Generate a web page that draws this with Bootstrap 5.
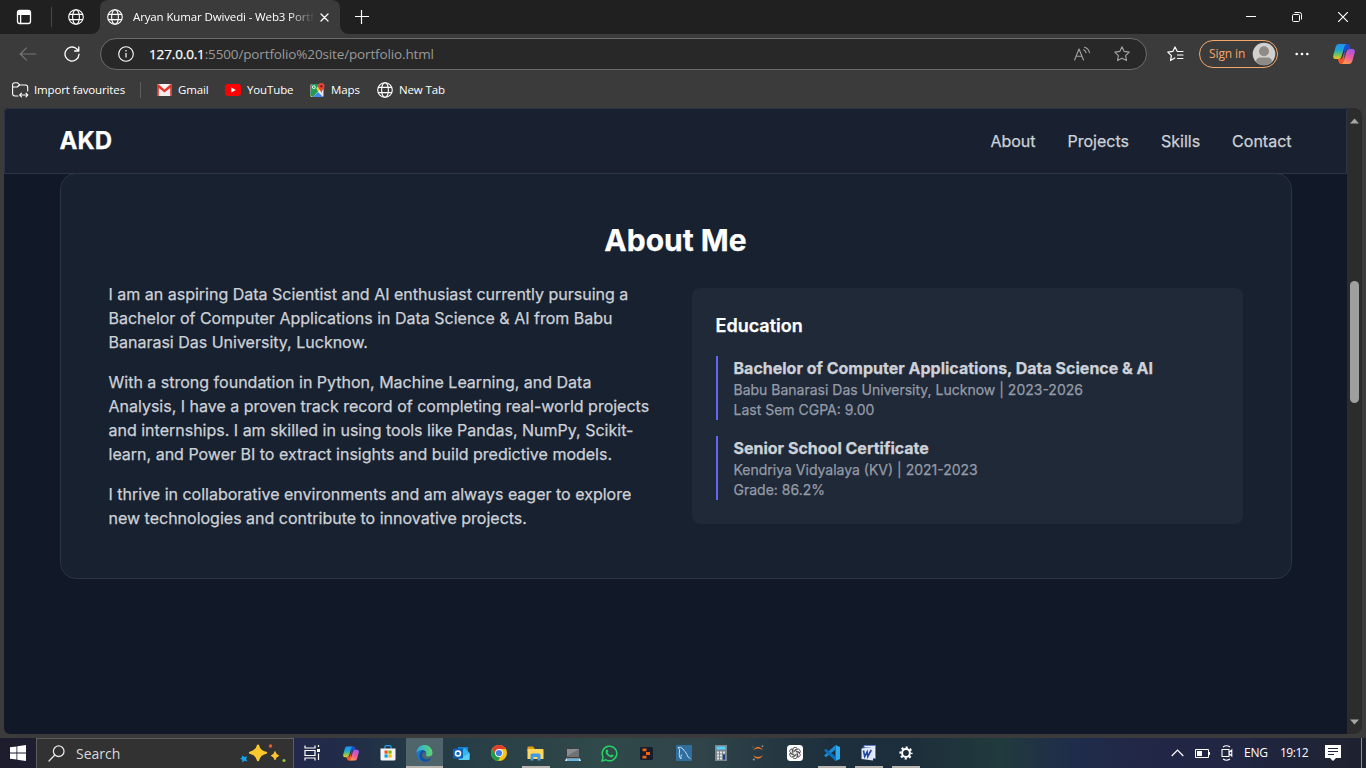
<!DOCTYPE html>
<html lang="en">
<head>
<meta charset="utf-8">
<meta name="viewport" content="width=device-width, initial-scale=1">
<title>Aryan Kumar Dwivedi - Web3 Portfolio</title>
<link href="https://cdn.jsdelivr.net/npm/bootstrap@5.3.0/dist/css/bootstrap.min.css" rel="stylesheet">
<style>
  body { width: 1366px; height: 768px; overflow: hidden; background: #3b3b3b; color: #fff; font: 12px/16px "Open Sans", "Noto Sans", sans-serif; }
  svg { display: block; flex: none; }
  .ln { fill: none; stroke: currentColor; stroke-linecap: round; stroke-linejoin: round; }
  /* browser chrome */
  .tabstrip { height: 34px; background: #202020; }
  .tabstrip .split { width: 1px; height: 20px; background: #484848; }
  .tab-active { width: 240px; height: 34px; background: #3b3b3b; border-radius: 8px 8px 0 0; position: relative; }
  .tab-active::before, .tab-active::after { content: ""; position: absolute; bottom: 0; width: 8px; height: 8px; }
  .tab-active::before { left: -8px; background: radial-gradient(circle at 0 0, #202020 7.5px, #3b3b3b 8px); }
  .tab-active::after { right: -8px; background: radial-gradient(circle at 100% 0, #202020 7.5px, #3b3b3b 8px); }
  .tab-title { width: 180px; overflow: hidden; white-space: nowrap; font-size: 11.5px; letter-spacing: -.13px; -webkit-mask-image: linear-gradient(90deg, #000 155px, transparent 182px); mask-image: linear-gradient(90deg, #000 155px, transparent 182px); }
  .toolbar { height: 40px; }
  .omnibox { width: 1047px; height: 32px; background: #282828; border: 1px solid #6c6c6c; border-radius: 16px; }
  .url { font-size: 13.5px; letter-spacing: -.14px; color: #9a9a9a; }
  .url b { font-weight: 400; color: #fff; -webkit-text-stroke: .25px; }
  .signin { width: 79px; height: 28px; border: 1px solid #f5a66a; border-radius: 14px; color: #f5a66a; font-size: 12px; letter-spacing: -.1px; }
  .favs { height: 34px; font-size: 11.5px; letter-spacing: -.13px; padding-bottom: 2px; white-space: nowrap; }
  .favs .split { width: 1px; height: 16px; background: #5c5c5c; }
  /* page */
  .viewport-row { height: 626px; margin-left: 4px; margin-right: 4px; }
  .site { width: 1343px; background: #111827; border-radius: 5px 0 0 6px; overflow: hidden; font-family: Inter, sans-serif; font-size: 16px; line-height: 24px; color: #cdd1d8; -webkit-text-stroke: .25px; }
  .site-head { height: 66px; background: #192130; border: 1px solid #2a3545; border-radius: 5px 0 0 0; position: relative; z-index: 1; }
  .wrap { width: 1280px; padding: 0 24px; margin: 0 auto; }
  .brand { font-size: 24px; line-height: 32px; font-weight: 700; color: #fff; }
  .menu { gap: 32px; font-weight: 400; }
  .glass { background: #18212f; border: 1px solid #2a3545; border-radius: 16px; padding: 48px; margin-top: -1px; }
  .glass h2 { font-size: 30px; line-height: 36px; font-weight: 700; color: #fff; margin-bottom: 24px; }
  .two { display: grid; grid-template-columns: 1fr 1fr; gap: 32px; align-items: center; }
  .two p { margin: 0 0 16px; }
  .two p:last-child { margin-bottom: 0; }
  .panel { background: #202937; border-radius: 8px; padding: 24px; }
  .panel h3 { font-size: 18px; line-height: 28px; font-weight: 600; color: #fff; margin-bottom: 16px; }
  .degree { border-left: 2px solid #6366f1; padding-left: 16px; }
  .degree + .degree { margin-top: 16px; }
  .degree h4 { font-size: 16px; line-height: 24px; font-weight: 700; margin: 0; color: #cdd1d8; }
  .degree div { font-size: 14px; line-height: 20px; color: #949ba8; }
  .sbar { width: 15px; background: #2c2c2c; border-radius: 0 8px 8px 0; }
  .sbar i { width: 9px; height: 122px; border-radius: 5px; background: #9f9f9f; margin-top: 157px; margin-bottom: auto; }
  /* taskbar */
  .taskbar { height: 30px; margin-top: 4px; background: linear-gradient(90deg, #1c1c2c 0, #22294c 294px, #212c48 345px, #233945 410px, #30494a 600px, #30444a 700px, #1d2f3c 830px, #1c2d3b 905px, #213a3d 1000px, #1f2c4b 1075px, #222647 1150px, #212642 1240px, #1e222e 1366px); }
  .search { width: 258px; height: 30px; background: #323232; border: 1px solid #5d5d5d; border-bottom: 0; font-size: 14px; color: #d9d9d9; }
  .app { width: 37px; height: 30px; position: relative; }
  .app.current { background: #50656b; }
  .app.open::after, .app.current::after { content: ""; position: absolute; bottom: 0; left: 5px; width: 28px; height: 2px; background: #b7b3ae; }
  .app.current::after { left: 0; width: 37px; }
  .tray { font-size: 12px; }
</style>
</head>
<body class="d-flex flex-column">
<svg width="0" height="0" class="position-absolute">
  <defs>
    <symbol id="globe" viewBox="0 0 16 16"><g class="ln" stroke-width="1.1"><circle cx="8" cy="8" r="7.3"/><ellipse cx="8" cy="8" rx="3.4" ry="7.3"/><path d="M1.4 5.4h13.2M1.4 10.6h13.2"/></g></symbol>
    <linearGradient id="cp1" x1="0" y1="0" x2="0" y2="1"><stop offset="0" stop-color="#2391f0"/><stop offset=".4" stop-color="#19a7d8"/><stop offset=".7" stop-color="#6cc263"/><stop offset="1" stop-color="#f5c51e"/></linearGradient>
    <linearGradient id="cp2" x1=".7" y1="0" x2=".3" y2="1"><stop offset="0" stop-color="#a456ea"/><stop offset=".5" stop-color="#ea5aa0"/><stop offset="1" stop-color="#ff9a4a"/></linearGradient>
    <symbol id="copilot" viewBox="0 0 22 20">
      <path d="M11 0h3.400q1.600 0 2.200 1.700l1.200 3.500h-3q-1.500 0-2 1.500L11 13z" fill="#1b50c8"/>
      <path d="M11 20H8q-1.600 0-2.200-1.700l-1.200-3.600h3q1.500 0 2-1.500L11.400 8z" fill="#f1562a"/>
      <path d="M6 0h7.300q-1.300.6-1.900 2.600L8.500 12.500Q7.800 15 5.300 15H2.500Q-.5 15 .3 11.500L2.600 3Q3.500 0 6 0z" fill="url(#cp1)"/>
      <path d="M16 20H8.700q1.300-.6 1.900-2.600l2.900-9.900Q14.200 5 16.700 5h2.800q3 0 2.200 3.500L19.400 17Q18.500 20 16 20z" fill="url(#cp2)"/>
    </symbol>
  </defs>
</svg>

<div class="tabstrip d-flex align-items-center">
  <svg width="16" height="16" viewBox="0 0 16 16" style="margin-left:16px"><g class="ln" stroke-width="1.300"><rect x="1.500" y="1.500" width="13" height="13" rx="2.200"/><path d="M1.500 5.300h13M4.600 5.500v9" /></g><path d="M2 3.500Q2 2 3.500 2h9Q14 2 14 3.500V5H2z" fill="#fff"/></svg>
  <span class="split" style="margin-left:19px"></span>
  <svg width="16" height="16" style="margin-left:16px"><use href="#globe"/></svg>
  <div class="tab-active d-flex align-items-center" style="margin-left:16px">
    <svg width="16" height="16" style="margin-left:7px"><use href="#globe"/></svg>
    <span class="tab-title" style="margin-left:10px">Aryan Kumar Dwivedi - Web3 Portfolio</span>
    <svg width="9" height="9" viewBox="0 0 9 9" style="margin-left:7px"><path class="ln" stroke-width="1.300" d="M1 1l7 7M8 1L1 8"/></svg>
  </div>
  <svg width="14" height="14" viewBox="0 0 14 14" style="margin-left:15px"><path d="M6.500 0v14M0 6.500h14" stroke="#fff" stroke-width="1.200"/></svg>
  <svg class="ms-auto" width="10" height="10" viewBox="0 0 10 10"><path d="M0 4.500h10" stroke="#fff"/></svg>
  <svg width="10" height="10" viewBox="0 0 10 10" style="margin-left:36px"><g fill="none" stroke="#fff"><rect x=".5" y="2.500" width="7" height="7" rx="1"/><path d="M2.500.5h5q2 0 2 2v5"/></g></svg>
  <svg width="10" height="10" viewBox="0 0 10 10" style="margin-left:36px;margin-right:18px"><path d="M0 0l10 10M10 0L0 10" stroke="#fff" stroke-width="1.200"/></svg>
</div>

<div class="toolbar d-flex align-items-center">
  <svg width="17" height="14" viewBox="0 0 17 14" style="margin-left:19px;color:#777"><path class="ln" stroke-width="1.100" d="M7.500.8L1.200 7l6.300 6.200M1.200 7H16.500"/></svg>
  <svg width="16" height="16" viewBox="0 0 16 16" style="margin-left:28px"><path class="ln" stroke-width="1.300" d="M15 8.200A7 7 0 1 1 12.300 2.500L14.800 5M14.800.8V5h-4.200"/></svg>
  <div class="omnibox d-flex align-items-center" style="margin-left:20px">
    <svg width="16" height="16" viewBox="0 0 16 16" style="margin-left:17px"><circle class="ln" cx="8" cy="8" r="7.300" stroke-width="1.100"/><path d="M8 7v4.600M8 4v1.600" stroke="#ddd" stroke-width="1.400"/></svg>
    <span class="url" style="margin-left:15px"><b>127.0.0.1</b>:5500/portfolio%20site/portfolio.html</span>
    <svg class="ms-auto" width="17" height="16" viewBox="0 0 17 16" style="color:#a3a3a3"><path class="ln" stroke-width="1.100" d="M.6 14L5 3l4.500 11M2.200 10.200h5.600M9.500 3.800q2 .6 2.600 3M10.500 1.200q4 1 5 5.500"/></svg>
    <svg width="16" height="16" viewBox="0 0 16 16" style="margin-left:23px;margin-right:16px;color:#a3a3a3"><path class="ln" stroke-width="1.100" d="M8 .8l2.200 4.600 5 .7-3.600 3.500.9 5L8 12.200l-4.500 2.400.9-5L.8 6.100l5-.7z"/></svg>
  </div>
  <svg width="17" height="16" viewBox="0 0 17 16" style="margin-left:20px"><path class="ln" stroke-width="1.200" d="M10.200 5.300L8 .9 5.800 5.400l-5 .7 3.600 3.500-.9 5L7.800 12M10.500 5.500h5.500M10.500 9h5.500M10.500 12.500h5.500"/></svg>
  <div class="signin d-flex align-items-center" style="margin-left:15px">
    <span style="margin-left:9px">Sign in</span>
    <svg class="ms-auto" width="24" height="24" viewBox="0 0 24 24" style="margin-right:1px"><circle cx="12" cy="12" r="11.300" fill="#d2d0ce"/><circle cx="12" cy="9.300" r="5" fill="#8e8a86"/><path d="M4 19q1-3.500 4-3.500h8q3 0 4 3.500-3 4.300-8 4.300T4 19z" fill="#8e8a86"/></svg>
  </div>
  <svg width="14" height="4" viewBox="0 0 14 4" style="margin-left:17px"><g fill="#fff"><circle cx="1.700" cy="2" r="1.300"/><circle cx="7" cy="2" r="1.300"/><circle cx="12.300" cy="2" r="1.300"/></g></svg>
  <svg width="22" height="20" style="margin-left:24px"><use href="#copilot"/></svg>
</div>

<div class="favs d-flex align-items-center">
  <svg width="17" height="16" viewBox="0 0 17 16" style="margin-left:12px"><path class="ln" stroke-width="1.100" d="M6 14H3Q.6 14 .6 11.600V3Q.6.800 3 .8h2.500L7.800 3H13.500Q15.700 3 15.700 5.200V9M.6 5h4.600L7.500 3M8 13h7.500M9.500 11.200l-1.800 1.800 1.800 1.800M14 11.200l1.800 1.800-1.800 1.800"/></svg>
  <span style="margin-left:5px;width:92px">Import favourites</span>
  <span class="split" style="margin-left:14px"></span>
  <svg width="15" height="12" viewBox="0 0 15 12" style="margin-left:16px"><rect width="15" height="12" rx="1.200" fill="#eee"/><path d="M0 1.200Q0 0 1.200 0L7.500 5.500 13.800 0Q15 0 15 1.200V12h-1.800V4L7.500 8.500 1.800 4V12H0z" fill="#e2352b"/><path d="M3 0h9L7.500 4z" fill="#f6f6f6"/></svg>
  <span style="margin-left:6px;width:31px">Gmail</span>
  <svg width="16" height="12" viewBox="0 0 16 12" style="margin-left:16px"><rect width="16" height="12" rx="3" fill="#f00"/><path d="M6.300 3.400v5.200L10.800 6z" fill="#fff"/></svg>
  <span style="margin-left:6px;width:46px">YouTube</span>
  <svg width="15" height="15" viewBox="0 0 15 15" style="margin-left:17px"><rect x=".5" y="1" width="13" height="13" rx="1.500" fill="#e8e8e8"/><path d="M2 1h8L1 12V2.500Q1 1 2 1z" fill="#1f9d58"/><path d="M3 14l5-5 5 5z" fill="#4285f4"/><path d="M.5 12L9 3l1.300 3L2.500 14H2Q.5 14 .5 12z" fill="#f7ca2d"/><path d="M.5 9.500V12.500L3 14 8 8.500 6 5z" fill="#1f9d58"/><circle cx="3.800" cy="4.200" r="1.400" fill="none" stroke="#fff"/><path d="M11.300 0a3.300 3.300 0 0 1 3.300 3.300q0 1.500-1.700 3.500-1.200 1.500-1.600 3.200-.4-1.700-1.600-3.200Q8 4.800 8 3.300A3.300 3.300 0 0 1 11.300 0z" fill="#e0443a"/><circle cx="11.300" cy="3.300" r="1.200" fill="#8b1d16"/></svg>
  <span style="margin-left:6px;width:29px">Maps</span>
  <svg width="16" height="16" style="margin-left:17px"><use href="#globe"/></svg>
  <span style="margin-left:6px">New Tab</span>
</div>

<div class="viewport-row d-flex">
  <main class="site">
    <header class="site-head d-flex align-items-center">
      <div class="wrap d-flex justify-content-between align-items-center">
        <span class="brand">AKD</span>
        <nav class="menu d-flex"><span>About</span><span>Projects</span><span>Skills</span><span>Contact</span></nav>
      </div>
    </header>
    <div class="wrap">
      <section class="glass">
        <h2 class="text-center">About Me</h2>
        <div class="two">
          <div>
            <p>I am an aspiring Data Scientist and AI enthusiast currently pursuing a Bachelor of Computer Applications in Data Science &amp; AI from Babu Banarasi Das University, Lucknow.</p>
            <p>With a strong foundation in Python, Machine Learning, and Data Analysis, I have a proven track record of completing real-world projects and internships. I am skilled in using tools like Pandas, NumPy, Scikit-learn, and Power BI to extract insights and build predictive models.</p>
            <p>I thrive in collaborative environments and am always eager to explore new technologies and contribute to innovative projects.</p>
          </div>
          <div class="panel">
            <h3>Education</h3>
            <div class="degree"><h4>Bachelor of Computer Applications, Data Science &amp; AI</h4><div>Babu Banarasi Das University, Lucknow | 2023-2026</div><div>Last Sem CGPA: 9.00</div></div>
            <div class="degree"><h4>Senior School Certificate</h4><div>Kendriya Vidyalaya (KV) | 2021-2023</div><div>Grade: 86.2%</div></div>
          </div>
        </div>
      </section>
    </div>
  </main>
  <div class="sbar d-flex flex-column align-items-center">
    <svg width="9" height="6" viewBox="0 0 9 6" style="margin-top:10px"><path d="M0 5.500L4.500.5 9 5.500z" fill="#a5a5a5"/></svg>
    <i></i>
    <svg width="9" height="6" viewBox="0 0 9 6" style="margin-bottom:9px"><path d="M0 .5h9L4.500 5.500z" fill="#a5a5a5"/></svg>
  </div>
</div>

<footer class="taskbar d-flex align-items-center">
  <svg width="16" height="16" viewBox="0 0 16 16" style="margin-left:10px"><path d="M0 2.300L6.500 1.400V7.600H0zM7.300 1.300L16 0V7.600H7.300zM0 8.400h6.500v6.200L0 13.700zM7.300 8.400H16V16l-8.700-1.300z" fill="#fff"/></svg>
  <div class="search d-flex align-items-center" style="margin-left:10px">
    <svg width="17" height="17" viewBox="0 0 17 17" style="margin-left:11px;color:#e4e4e4"><g class="ln" stroke-width="1.300"><circle cx="10.700" cy="6.200" r="5.300"/><path d="M6.800 10L1 16"/></g></svg>
    <span style="margin-left:11px">Search</span>
    <svg class="ms-auto" width="46" height="22" viewBox="0 0 46 22" style="margin-right:7px"><path d="M18 2.500q1.500 6 8 7.300-6.500 1.600-8 7.300-1.500-5.700-8-7.300Q16.500 8.500 18 2.500z" fill="#ffc72e" stroke="#ffc72e" stroke-width="2.200" stroke-linejoin="round"/><path d="M35 8.500q.8 3.300 3.800 4.200-3 .9-3.800 4.200-.8-3.300-3.800-4.200Q34.200 11.800 35 8.500z" fill="#ffc72e" stroke="#ffc72e" stroke-width=".8" stroke-linejoin="round"/><path d="M2 12.500l2.500 1.600 2.700-.8-1 2.500 1 2.600-2.800-.6-2.100 1.700-.1-2.700L0 15.200l2-.4z" fill="#18a4e8"/><circle cx="30.500" cy="3" r="1.700" fill="#f0592a"/><circle cx="44" cy="17.500" r="1.600" fill="#8cc63f"/></svg>
  </div>
  <div class="d-flex">
    <span class="app d-flex align-items-center justify-content-center" style="margin-right:1px"><svg width="17" height="16" viewBox="0 0 17 16"><path d="M1 .5V3h10V.5M1 15.500V13h10v2.500M1 5.500h10v5H1zM14.500 0v2M14.500 8.500V15" fill="none" stroke="#fff" stroke-width="1.200"/><rect x="13" y="4" width="3" height="3" fill="#fff"/></svg></span>
    <span class="app d-flex align-items-center justify-content-center"><svg width="16" height="15" viewBox="0 0 22 20"><use href="#copilot" width="22" height="20"/></svg></span>
    <span class="app d-flex align-items-center justify-content-center"><svg width="16" height="16" viewBox="0 0 16 16"><path d="M5 4V1.500Q5 .6 6 .6h4q1 0 1 .9V4" fill="none" stroke="#25a3e8" stroke-width="1.200"/><path d="M.5 3.500h15V14q0 1.500-1.500 1.500H2Q.5 15.500.5 14z" fill="#f5f5f5"/><path d="M4.500 5.500h3.200v3.200H4.500z" fill="#f25022"/><path d="M8.400 5.500h3.200v3.200H8.400z" fill="#7fba00"/><path d="M4.500 9.400h3.200v3.200H4.500z" fill="#00a4ef"/><path d="M8.400 9.400h3.200v3.200H8.400z" fill="#ffb900"/></svg></span>
    <span class="app current d-flex align-items-center justify-content-center"><svg width="17" height="17" viewBox="0 0 17 17"><defs><linearGradient id="e1"><stop offset="0" stop-color="#2aa9e8"/><stop offset="1" stop-color="#5fd76a"/></linearGradient></defs><path d="M.5 8A8 8 0 0 1 16.500 7.800Q16.500 11.500 12.500 11.500 9.500 11.500 10 9.800 10.600 9 10.300 7.800 9.500 5.500 6 5.300 2.500 5.300.5 8z" fill="url(#e1)"/><path d="M.5 8Q2.500 5 6 5.300q3 .2 4 2-1.300-.7-2.800.2Q5.500 8.800 6 11q1 3 4.300 3.400 2.500.2 5-1.600-2.500 4-6.800 4Q.5 16.300.5 8z" fill="#1876cc"/><path d="M6 5.300q3 .2 4 2-1.300-.7-2.800.2Q5.500 8.800 6 11q1.300 3.800 5.500 3.400 2-.2 3.800-1.600-2 4-6.500 4-5-1-5.300-5.500Q3.500 7.500 6 5.300z" fill="#124f9c"/></svg></span>
    <span class="app d-flex align-items-center justify-content-center"><svg width="17" height="15" viewBox="0 0 17 15"><path d="M5 1h10v7H5z" fill="#1682d8"/><path d="M12 2l4.500 5V13q0 1-1 1H6L4.500 7z" fill="#35b5ee"/><path d="M5 14L16.500 7V13q0 1-1 1z" fill="#5bd0f7"/><rect y="2.500" width="10" height="10" rx="1" fill="#0f63b8"/><circle cx="5" cy="7.500" r="2.500" fill="none" stroke="#fff" stroke-width="1.500"/></svg></span>
    <span class="app d-flex align-items-center justify-content-center"><svg width="16" height="16" viewBox="0 0 16 16"><circle cx="8" cy="8" r="8" fill="#fbc116"/><path d="M1.100 4A8 8 0 0 1 14.900 4H8Q5 4.200 4.500 9.500z" fill="#e33b2e"/><path d="M1.100 4l3.700 6q1.500 2 4.200 1.800L7.200 16A8 8 0 0 1 1.100 4z" fill="#229a4b"/><circle cx="8" cy="8" r="3.900" fill="#fff"/><circle cx="8" cy="8" r="3.100" fill="#3c7de8"/></svg></span>
    <span class="app open d-flex align-items-center justify-content-center"><svg width="17" height="15" viewBox="0 0 17 15"><path d="M.5 1.500Q.5.500 1.500.5H6l1.500 2V5h-7z" fill="#e29d13"/><path d="M.5 3h15.300q.7 0 .7.700V13H.5z" fill="#ffd75e"/><path d="M3.500 14.500V9q0-1.500 1.500-1.500h7q1.500 0 1.500 1.500v5.500h-3V11h-4v3.500z" fill="#3f9be8"/></svg></span>
    <span class="app d-flex align-items-center justify-content-center"><svg width="16" height="14" viewBox="0 0 16 14" style="margin-top:3px"><path d="M1.500.5h13v9h-13z" fill="#6f7275" stroke="#3d4143"/><path d="M2 1h12L2 8z" fill="#8b8e91"/><path d="M1 10.500h14l1 2.500H0z" fill="#d8e2e8"/><path d="M2 12h12" stroke="#3ea7e0" stroke-width="1.500"/></svg></span>
    <span class="app d-flex align-items-center justify-content-center"><svg width="17" height="17" viewBox="0 0 17 17"><path d="M1 16l1.100-4A7.300 7.300 0 1 1 5 14.900z" fill="none" stroke="#25d366" stroke-width="1.500"/><path d="M5.300 4.800q.8-.8 1.300 0l.7 1.500q0 .5-.8 1.300 1 2 3 2.800.9-1.100 1.300-1l1.600.8q.5.400-.1 1.400-1.300 1.300-3.400.4-3-1.200-4.200-4-.4-2 .6-3.200z" fill="#25d366"/></svg></span>
    <span class="app d-flex align-items-center justify-content-center"><svg width="13" height="13" viewBox="0 0 13 13"><rect width="13" height="13" rx="1.500" fill="#161d2f"/><path d="M2.500 1.500h4v2.800h-4zM6 5.100h4v2.800H6zM2.500 8.700h4v2.800h-4z" fill="#f26207"/></svg></span>
    <span class="app d-flex align-items-center justify-content-center"><svg width="16" height="16" viewBox="0 0 16 16"><rect width="16" height="16" rx="1" fill="#2f6f9f"/><path d="M2 2.500q3-1 5 1.500l2 2.500q2.500 3 2.800 5.200l2.700 2M2 2.500q1.800 1.500 1.500 3.500-.7 4 .3 6.500L5 14q-.5-3 .8-4.500" fill="none" stroke="#c5dcea"/></svg></span>
    <span class="app d-flex align-items-center justify-content-center"><svg width="12" height="16" viewBox="0 0 12 16"><rect width="12" height="16" fill="#7b858b"/><path d="M1.500 1.500h9v3h-9z" fill="#55d0f8"/><path d="M2 6.500h2v2H2zM5 6.500h2v2H5zM8 6.500h2v2H8zM2 9.500h2v2H2zM5 9.500h2v2H5zM2 12.500h2v2H2zM5 12.500h2v2H5z" fill="#e4e8ec"/><path d="M8 9.500h2v5H8z" fill="#173f88"/></svg></span>
    <span class="app d-flex align-items-center justify-content-center"><svg width="12" height="16" viewBox="0 0 12 16"><path d="M.8 5.300Q6-1.700 11.200 5.300 6 1.800.8 5.300zM.8 10.200Q6 17.200 11.200 10.200 6 13.700.8 10.200z" fill="#f37726"/><circle cx="10.500" cy="1.200" r=".9" fill="#8a8f92"/><circle cx="1.800" cy="14.500" r="1" fill="#9a9fa2"/><circle cx="1" cy="2" r=".6" fill="#8a8f92"/></svg></span>
    <span class="app d-flex align-items-center justify-content-center"><svg width="16" height="16" viewBox="0 0 16 16"><rect width="16" height="16" rx="3.500" fill="#fff"/><g fill="none" stroke="#222" stroke-width=".7"><g id="pt"><path d="M6 7.200V4.300Q6 2.300 8 2.300q1.500 0 2.300 1.200L7.300 5.300V7"/></g><use href="#pt" transform="rotate(60 8 8)"/><use href="#pt" transform="rotate(120 8 8)"/><use href="#pt" transform="rotate(180 8 8)"/><use href="#pt" transform="rotate(240 8 8)"/><use href="#pt" transform="rotate(300 8 8)"/></g></svg></span>
    <span class="app open d-flex align-items-center justify-content-center"><svg width="16" height="16" viewBox="0 0 16 16"><path d="M11.500 0L16 2v12l-4.500 2z" fill="#2fa8f0"/><path d="M11.500 0v4.500L2 12.300.3 11v-.8z" fill="#1a8ad6"/><path d="M11.500 16v-4.500L2 3.700.3 5v.8z" fill="#0b70bd"/></svg></span>
    <span class="app open d-flex align-items-center justify-content-center"><svg width="15" height="16" viewBox="0 0 15 16"><path d="M3 .5h11.500v13H3z" fill="#e9effa" stroke="#5b7cc4"/><path d="M1 2h9v12H1z" fill="#2a5699" opacity=".6"/><path d="M.5 3.500L12 2v13.500L.5 14z" fill="#dfe7f6"/><path d="M2.500 5.500l1.200 6 2.500-4.500.6 4.500L10.300 5" fill="none" stroke="#2346a0" stroke-width="1.600"/></svg></span>
    <span class="app open d-flex align-items-center justify-content-center"><svg width="14" height="14" viewBox="0 0 14 14"><circle cx="7" cy="7" r="3.900" fill="none" stroke="#fff" stroke-width="2"/><circle cx="7" cy="7" r="5.600" fill="none" stroke="#fff" stroke-width="2" stroke-dasharray="2.200 2.198" stroke-dashoffset="1.100"/></svg></span>
  </div>
  <div class="tray d-flex align-items-center ms-auto">
    <svg width="13" height="8" viewBox="0 0 13 8"><path d="M.7 7l5.800-5.800L12.300 7" fill="none" stroke="#fff" stroke-width="1.200"/></svg>
    <svg width="15" height="9" viewBox="0 0 15 9" style="margin-left:11px"><path d="M.5.500h13v8H.5z" fill="none" stroke="#fff"/><path d="M2 2h5v5H2zM14 3h1v3h-1z" fill="#fff"/></svg>
    <svg width="12" height="16" viewBox="0 0 12 16" style="margin-left:11px"><path d="M2 2Q5.500-.5 9 2M2 14q3.500 2.500 7 0M1 4.500h7v7H1zM8 7.500L10.800 5v6L8 8.500" fill="none" stroke="#fff" stroke-width="1.100"/></svg>
    <span style="margin-left:11px;width:24px;letter-spacing:-.2px">ENG</span>
    <span style="margin-left:12px;width:27px;letter-spacing:-.5px">19:12</span>
    <svg width="16" height="16" viewBox="0 0 16 16" style="margin-left:18px"><path d="M0 0h16v13h-5l-3 3-3-3H0z" fill="#fff"/><path d="M3 3.500h10M3 6.500h10M3 9.500h6" stroke="#20263c"/></svg>
    <span style="width:1px;height:30px;background:#8a8c93;margin-left:20px;margin-right:4px"></span>
  </div>
</footer>
<script src="https://cdn.jsdelivr.net/npm/bootstrap@5.3.0/dist/js/bootstrap.bundle.min.js"></script>
</body>
</html>
